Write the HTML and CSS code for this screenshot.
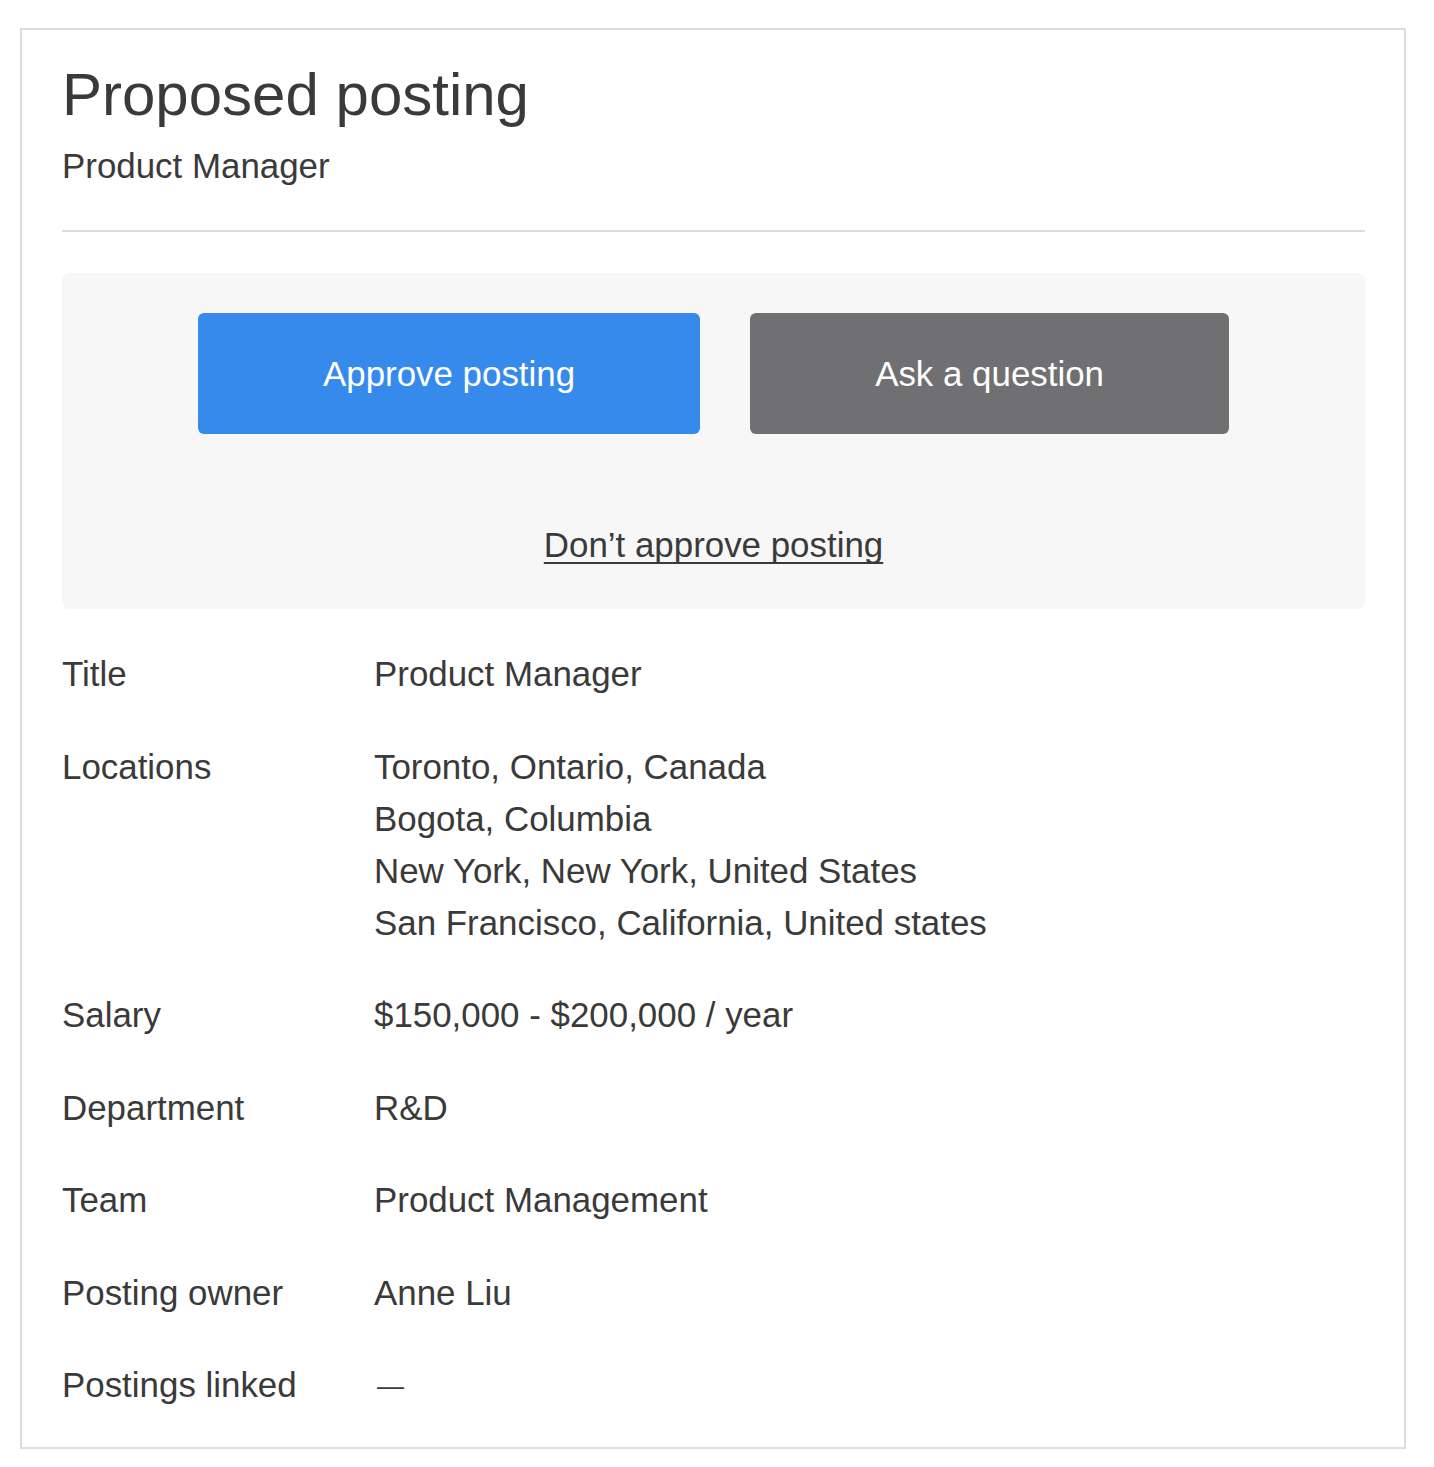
FILE: index.html
```html
<!DOCTYPE html>
<html lang="en">
<head>
  <meta charset="UTF-8" />
  <meta name="viewport" content="width=device-width, initial-scale=1" />
  <title>Proposed posting</title>
  <link rel="stylesheet" href="styles.css">
</head>
<body>
  <div class="card">
    <h1>Proposed posting</h1>
    <div class="subtitle">Product Manager</div>

    <div class="actions">
      <div class="buttons">
        <button class="approve-btn">Approve posting</button>
        <button class="ask-btn">Ask a question</button>
      </div>
      <a href="#" class="reject-link">Don’t approve posting</a>
    </div>

    <dl class="details">
      <dt>Title</dt>
      <dd>Product Manager</dd>

      <dt>Locations</dt>
      <dd>
        Toronto, Ontario, Canada<br>
        Bogota, Columbia<br>
        New York, New York, United States<br>
        San Francisco, California, United states
      </dd>

      <dt>Salary</dt>
      <dd>$150,000 - $200,000 / year</dd>

      <dt>Department</dt>
      <dd>R&amp;D</dd>

      <dt>Team</dt>
      <dd>Product Management</dd>

      <dt>Posting owner</dt>
      <dd>Anne Liu</dd>

      <dt>Postings linked</dt>
      <dd><span class="empty">—</span></dd>
    </dl>
  </div>
</body>
</html>
```

FILE: styles.css
```css
body {
  margin: 0;
  font-family: "Liberation Sans", Arial, sans-serif;
  font-size: 34.9px;
  line-height: 52px;
  color: #3a3a3a;
  background: #ffffff;
}

.card {
  margin: 28px 28px 16px 20px;
  border: 2px solid #dddddd;
  padding: 30px 39px 35px 40px;
}

h1 {
  margin: 0;
  font-size: 60px;
  line-height: 70px;
  font-weight: normal;
  color: #3a3a3a;
}

.subtitle {
  margin-top: 10px;
  padding-bottom: 38px;
  border-bottom: 2px solid #dddddd;
}

.actions {
  margin-top: 41px;
  background: #f7f7f7;
  border-radius: 8px;
  padding: 40px 20px 38px;
  display: flex;
  flex-direction: column;
  align-items: center;
}

.buttons {
  display: flex;
  justify-content: center;
  gap: 50px;
}

.approve-btn,
.ask-btn {
  font-family: inherit;
  font-size: 34.9px;
  line-height: 41px;
  padding: 40px 125px;
  border: none;
  border-radius: 6px;
  color: #ffffff;
  cursor: pointer;
}

.approve-btn {
  background-color: #368aeb;
}

.ask-btn {
  background-color: #707072;
}

.reject-link {
  margin-top: 85px;
  color: #3a3a3a;
  text-decoration: underline;
  text-underline-offset: 5px;
  text-decoration-thickness: 2px;
  text-decoration-skip-ink: none;
}

.details {
  margin: 39px 0 0;
  display: grid;
  grid-template-columns: 312px 1fr;
  row-gap: 40.5px;
}

.details dt,
.details dd {
  margin: 0;
}

.empty {
  font-size: 27px;
  margin-left: 3px;
  vertical-align: 2px;
}
```
